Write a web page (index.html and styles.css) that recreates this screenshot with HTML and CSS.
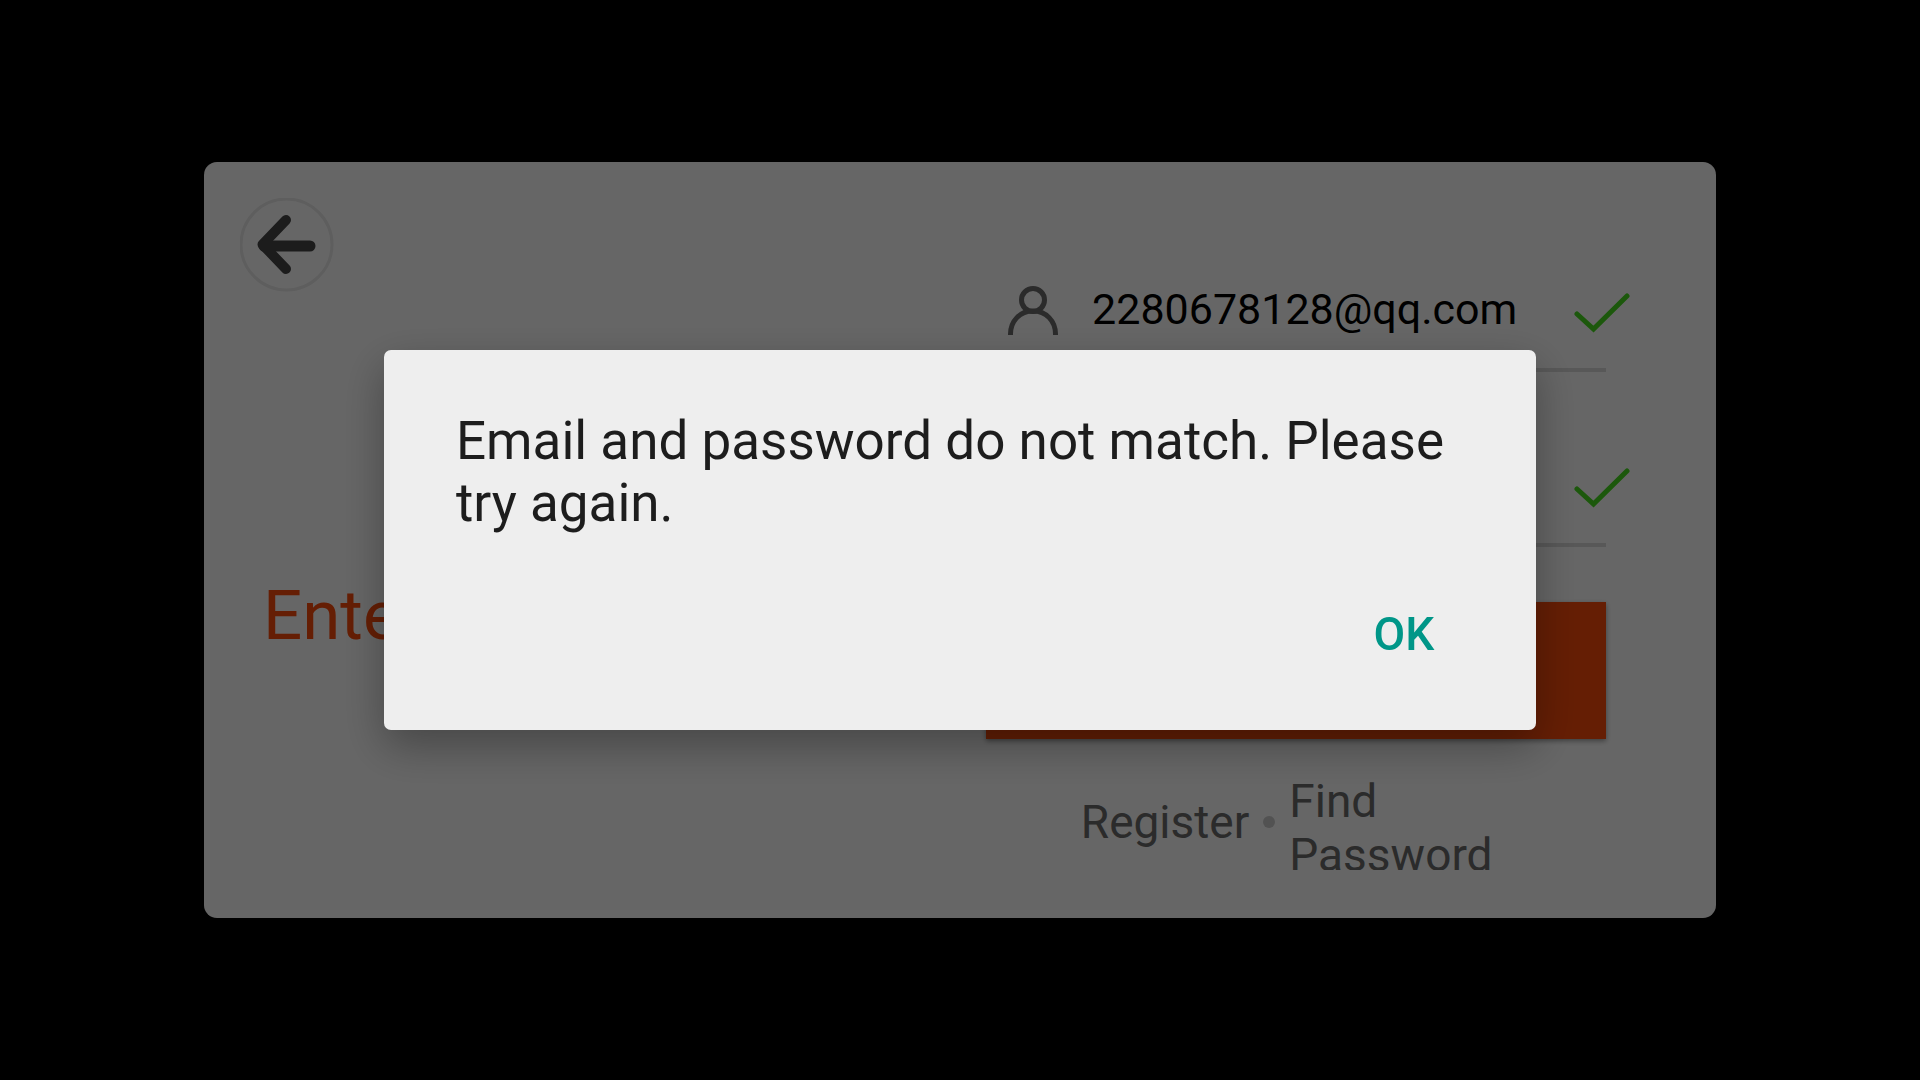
FILE: index.html
```html
<!DOCTYPE html>
<html lang="en">
<head>
<meta charset="utf-8">
<meta name="viewport" content="width=device-width, initial-scale=1">
<title>Log in</title>
<link rel="stylesheet" href="styles.css">
</head>
<body>
<main class="card">
  <section class="intro">
    <button class="back" type="button" aria-label="Back">
      <svg viewBox="0 0 94 94" aria-hidden="true">
        <circle class="back-ring" cx="46.500" cy="46.500" r="45.500"/>
        <path class="back-head" d="M46 22 22.500 46.500 46 71"/>
        <path class="back-shaft" d="M24 48H70"/>
      </svg>
    </button>
    <h1 class="heading">Enter</h1>
  </section>
  <form class="login">
    <div class="field">
      <label class="field-label" for="email" aria-label="Email">
        <svg class="field-icon" viewBox="0 0 50 50" aria-hidden="true">
          <circle cx="25" cy="14" r="11.500"/>
          <path d="M2.500 49V48C2.500 35 12 25 25 25S47.500 35 47.500 48V49"/>
        </svg>
      </label>
      <input id="email" class="field-input" type="text" value="2280678128@qq.com">
      <svg class="check" viewBox="0 0 56 40" aria-hidden="true"><path d="M3 21 19.500 36 53 3"/></svg>
    </div>
    <div class="field">
      <label class="field-label" for="password" aria-label="Password">
        <svg class="field-icon" viewBox="0 0 50 50" aria-hidden="true">
          <rect x="5" y="22" width="40" height="25" rx="3"/>
          <path d="M13 22V14a12 12 0 0 1 24 0V22"/>
        </svg>
      </label>
      <input id="password" class="field-input" type="password">
      <svg class="check" viewBox="0 0 56 40" aria-hidden="true"><path d="M3 21 19.500 36 53 3"/></svg>
    </div>
    <button class="submit" type="submit" aria-label="Log in"></button>
    <nav class="links">
      <a href="#register">Register</a>
      <span class="dot"></span>
      <a class="find" href="#find-password">Find Password</a>
    </nav>
  </form>
</main>
<div class="backdrop">
  <div class="dialog" role="alertdialog" aria-modal="true" aria-describedby="message">
    <p id="message" class="message">Email and password do not match. Please try again.</p>
    <button class="ok" type="button">OK</button>
  </div>
</div>
</body>
</html>
```

FILE: styles.css
```css
* {
  box-sizing: border-box;
}

body {
  margin: 0;
  min-height: 100vh;
  display: grid;
  place-items: center;
  background: #000;
  font-family: Roboto, "Liberation Sans", sans-serif;
  font-size: 46px;
  line-height: 54px;
}

button,
input {
  font: inherit;
  border: 0;
  padding: 0;
  background: none;
}

svg {
  display: block;
  flex: none;
  fill: none;
}

.card {
  width: 78.75%;
  min-height: 70vh;
  display: flex;
  border-radius: 13px;
  background: #fff;
}

.intro {
  flex: 1;
  padding: 36px;
}

.back {
  display: block;
  width: 94px;
  height: 94px;
  border-radius: 50%;
}

.back-ring {
  stroke: #ebebeb;
  stroke-width: 3;
}

.back-head {
  stroke: #464646;
  stroke-width: 10;
  stroke-linecap: round;
  stroke-linejoin: round;
}

.back-shaft {
  stroke: #464646;
  stroke-width: 11;
  stroke-linecap: round;
}

.heading {
  margin: 284px 0 0 23px;
  font-size: 69px;
  font-weight: 400;
  line-height: 80px;
  color: #fc4c0c;
}

.login {
  width: 41%;
  margin: 87px 110px 48px 0;
}

.field {
  display: flex;
  align-items: center;
  height: 123px;
  padding-left: 22px;
  border-bottom: 4px solid #dcdcdc;
}

.field + .field {
  margin-top: 52px;
}

.field-label {
  padding-top: 4px;
}

.field-icon {
  width: 50px;
  height: 50px;
  stroke: #6b6b6b;
  stroke-width: 5;
}

.field-input {
  flex: 1;
  min-width: 0;
  margin: 0 20px 0 34px;
  font-size: 43px;
  color: #000;
  outline: 0;
}

.check {
  width: 56px;
  height: 40px;
  margin: 8px -24px 0 0;
  stroke: #46dc1e;
  stroke-width: 5;
  stroke-linecap: round;
}

.submit {
  display: block;
  width: 100%;
  height: 137px;
  margin-top: 55px;
  background: #fc4c0c;
  box-shadow: 0 2px 5px rgba(0, 0, 0, 0.4);
}

.links {
  display: flex;
  justify-content: center;
  align-items: center;
  gap: 14px;
  height: 96px;
  margin-top: 35px;
  overflow: hidden;
}

.links a {
  color: #6b6b6b;
  text-decoration: none;
}

.find {
  width: 222px;
  max-height: 100%;
}

.dot {
  width: 12px;
  height: 12px;
  border-radius: 50%;
  background: #cdcdcd;
}

.backdrop {
  position: fixed;
  inset: 0;
  display: grid;
  place-items: center;
  background: rgba(0, 0, 0, 0.6);
}

.dialog {
  width: 60%;
  display: flex;
  flex-direction: column;
  padding: 60px 26px 36px 72px;
  border-radius: 7px;
  background: #eee;
  box-shadow: 0 16px 44px rgba(0, 0, 0, 0.32);
}

.message {
  margin: 0 46px 40px 0;
  font-size: 53px;
  line-height: 62px;
  color: #1d1d1d;
}

.ok {
  align-self: flex-end;
  min-width: 212px;
  height: 120px;
  font-weight: 500;
  color: #009688;
}
```
